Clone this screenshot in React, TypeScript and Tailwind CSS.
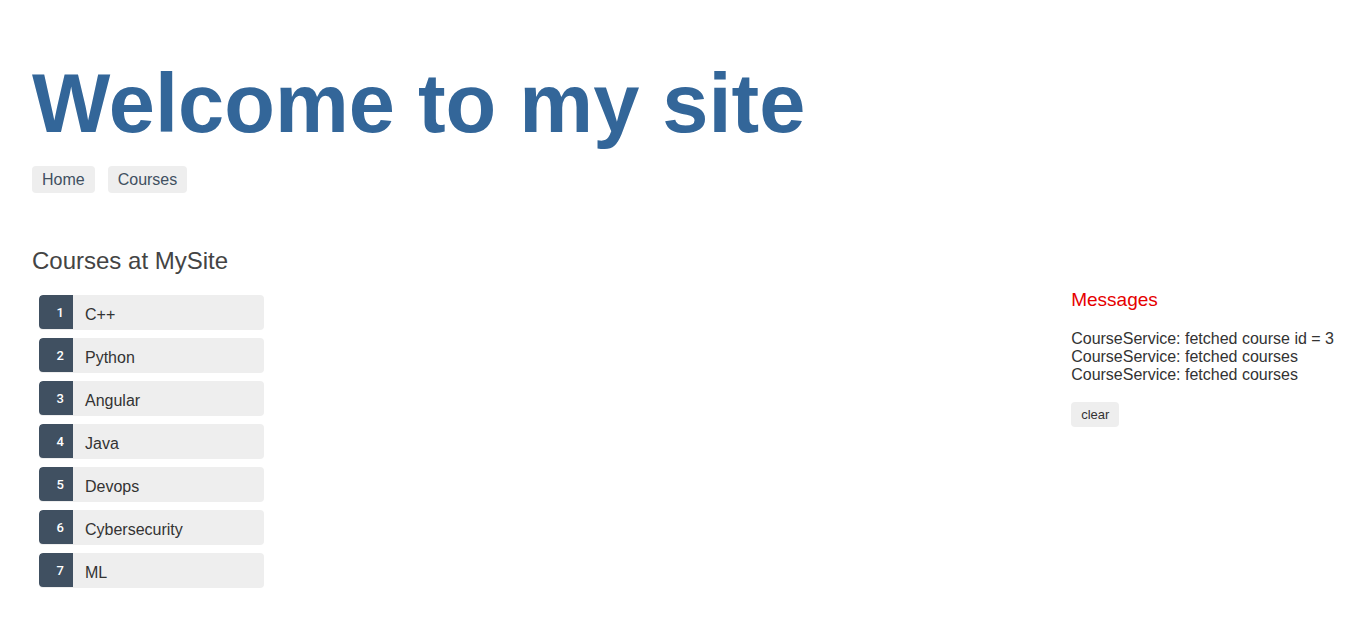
const courses: string[] = ["C++", "Python", "Angular", "Java", "Devops", "Cybersecurity", "ML"];

const messages: string[] = [
  "CourseService: fetched course id = 3",
  "CourseService: fetched courses",
  "CourseService: fetched courses",
];

function NavLink({ href, label }: { href: string; label: string }) {
  return (
    <a href={href} className="h-[27px] rounded bg-[#eeeeee] px-2.5 text-base leading-[27px] text-[#405061]">
      {label}
    </a>
  );
}

function CourseList() {
  return (
    <ul className="ml-[7px] mt-5 flex w-[225px] flex-col gap-2">
      {courses.map((name, index) => (
        <li key={name}>
          <a href={"#course-" + (index + 1)} className="flex h-[35px] overflow-hidden rounded bg-[#eeeeee] text-[#333333]">
            <span className="h-[34px] w-[34px] rounded-l bg-[#405061] pr-[9px] text-right font-[Roboto,sans-serif] text-[13px] font-medium leading-[35px] text-white">
              {index + 1}
            </span>
            <span className="pl-3 text-base leading-[40px]">{name}</span>
          </a>
        </li>
      ))}
    </ul>
  );
}

function Messages() {
  return (
    <section className="mt-[41px] shrink-0 text-[#333333]">
      <h2 className="text-[19px] leading-6 text-[#e60000]">Messages</h2>
      <div className="mt-[18px] text-base leading-[18px]">
        {messages.map((message, index) => (
          <p key={index}>{message}</p>
        ))}
      </div>
      <button type="button" className="mt-[18px] h-[25px] rounded bg-[#eeeeee] px-2.5 text-[13px] leading-[25px]">
        clear
      </button>
    </section>
  );
}

export default function App() {
  return (
    <div className="min-h-screen bg-white px-8 pb-8 pt-[58px] font-['Liberation_Sans',Arial,sans-serif]">
      <h1 className="text-[83px] font-bold leading-[92px] text-[#336699]">Welcome to my site</h1>
      <nav className="mt-4 flex gap-[13px]">
        <NavLink href="#home" label="Home" />
        <NavLink href="#courses" label="Courses" />
      </nav>
      <main className="mt-[54px] flex items-start justify-between">
        <section>
          <h2 className="text-2xl leading-7 text-[#444444]">Courses at MySite</h2>
          <CourseList />
        </section>
        <Messages />
      </main>
    </div>
  );
}
